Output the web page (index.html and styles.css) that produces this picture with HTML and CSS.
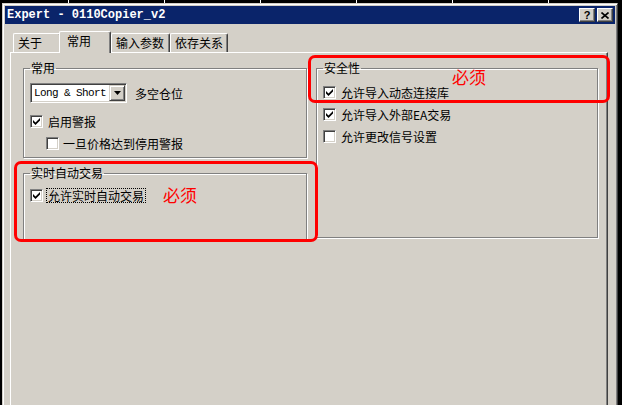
FILE: index.html
```html
<!DOCTYPE html>
<html>
<head>
<meta charset="utf-8">
<link rel="stylesheet" href="styles.css">
</head>
<body>
<div class="chart-top"></div>
<div class="dialog">
  <div class="titlebar">
    <span class="title">Expert - 0110Copier_v2</span>
    <div class="tbtns">
      <span class="tbtn help">?</span>
      <span class="tbtn close"><svg width="8" height="7" viewBox="0 0 8 7"><path d="M0.5 0.5 L7.5 6.5 M7.5 0.5 L0.5 6.5" stroke="#000" stroke-width="1.6" fill="none"/></svg></span>
    </div>
  </div>
  <div class="main">
    <div class="tabs">
      <span class="tab tab-about">关于</span>
      <span class="tab tab-common active">常用</span>
      <span class="tab tab-inputs">输入参数</span>
      <span class="tab tab-deps">依存关系</span>
    </div>
    <div class="panel">
      <div class="cols">
        <div class="col">
          <fieldset class="group g-common">
            <legend>常用</legend>
            <div class="stack">
              <div class="row">
                <div class="select">
                  <span class="sel-text">Long &amp; Short</span>
                  <span class="sel-btn"><svg width="7" height="4" viewBox="0 0 7 4"><path d="M0 0 H7 L3.5 4 Z" fill="#000"/></svg></span>
                </div>
                <span>多空仓位</span>
              </div>
              <div class="check gap12">
                <span class="box"><svg width="7" height="7" viewBox="0 0 7 7"><path d="M0 2 L2.5 4.5 L7 0 L7 2.5 L2.5 7 L0 4.5 Z" fill="#000"/></svg></span>
                <span>启用警报</span>
              </div>
              <div class="check gap9 indent">
                <span class="box"></span>
                <span>一旦价格达到停用警报</span>
              </div>
            </div>
          </fieldset>
          <fieldset class="group g-auto">
            <legend>实时自动交易</legend>
            <div class="check tight">
              <span class="box"><svg width="7" height="7" viewBox="0 0 7 7"><path d="M0 2 L2.5 4.5 L7 0 L7 2.5 L2.5 7 L0 4.5 Z" fill="#000"/></svg></span>
              <span class="focus">允许实时自动交易</span>
            </div>
          </fieldset>
        </div>
        <fieldset class="group g-safe">
          <legend>安全性</legend>
          <div class="stack">
            <div class="check">
              <span class="box"><svg width="7" height="7" viewBox="0 0 7 7"><path d="M0 2 L2.5 4.5 L7 0 L7 2.5 L2.5 7 L0 4.5 Z" fill="#000"/></svg></span>
              <span>允许导入动态连接库</span>
            </div>
            <div class="check gap9">
              <span class="box"><svg width="7" height="7" viewBox="0 0 7 7"><path d="M0 2 L2.5 4.5 L7 0 L7 2.5 L2.5 7 L0 4.5 Z" fill="#000"/></svg></span>
              <span>允许导入外部EA交易</span>
            </div>
            <div class="check gap9">
              <span class="box"></span>
              <span>允许更改信号设置</span>
            </div>
          </div>
        </fieldset>
      </div>
      <div class="mark mark-safe"></div>
      <span class="note note-safe">必须</span>
      <div class="mark mark-auto"></div>
      <span class="note note-auto">必须</span>
    </div>
  </div>
</div>
</body>
</html>
```
FILE: styles.css
```css
* { box-sizing: border-box; }
html, body { margin: 0; padding: 0; }
body {
  background: #000;
  width: 622px;
  height: 405px;
  overflow: hidden;
  font-family: "Noto Sans CJK SC", "Liberation Sans", sans-serif;
  font-size: 12px;
  color: #000;
}
.chart-top {
  height: 3px;
  background: repeating-linear-gradient(90deg, transparent 0 68px, #fff 68px 69px, transparent 69px 96px);
}
.dialog {
  margin-left: 2px;
  width: 616px;
  height: 430px;
  background: #d4d0c8;
  border: 1px solid;
  border-color: #d4d0c8 #404040 #404040 #d4d0c8;
  box-shadow: inset 1px 1px #fff, inset -1px -1px #808080;
  padding: 2px;
  display: flex;
  flex-direction: column;
}
.titlebar {
  height: 18px;
  background: #0a246a;
  display: flex;
  align-items: center;
  justify-content: space-between;
  padding: 0 2px;
}
.title {
  color: #fff;
  font: bold 12px/14px "Liberation Mono", monospace;
}
.tbtns { display: flex; gap: 2px; }
.tbtn {
  width: 16px;
  height: 14px;
  background: #d4d0c8;
  border: 1px solid;
  border-color: #fff #404040 #404040 #fff;
  box-shadow: inset -1px -1px #808080;
  display: flex;
  align-items: center;
  justify-content: center;
  font: bold 11px/1 "Liberation Sans", sans-serif;
}
.main {
  flex: 1;
  display: flex;
  flex-direction: column;
  padding: 7px 7px 0 5px;
}
.tabs {
  display: flex;
  align-items: flex-end;
  height: 21px;
  padding-left: 3px;
  position: relative;
  z-index: 1;
}
.tab {
  height: 19px;
  padding: 2px 0 0 4px;
  border: 1px solid;
  border-bottom: none;
  border-color: #fff #404040 #404040 #fff;
  box-shadow: inset -1px 0 #808080;
  border-radius: 2px 2px 0 0;
  line-height: 14px;
  white-space: nowrap;
  background: #d4d0c8;
}
.tab-about { width: 48px; }
.tab-common { width: 52px; }
.tab-inputs { width: 59px; }
.tab-deps { width: 58px; }
.tab.active {
  height: 22px;
  margin: 0 0 -1px -2px;
  padding-left: 7px;
  position: relative;
}
.panel {
  flex: 1;
  position: relative;
  border-top: 1px solid #fff;
  border-left: 1px solid #fff;
  border-right: 1px solid #404040;
  box-shadow: inset -1px 0 #808080;
  padding: 8px 9px 0 12px;
}
.cols {
  display: grid;
  grid-template-columns: 284px 282px;
  column-gap: 9px;
  align-items: stretch;
}
.col { display: flex; flex-direction: column; gap: 8px; }
fieldset.group {
  margin: 0;
  min-width: 0;
  border: 1px solid #808080;
  box-shadow: 1px 1px #fff, inset 1px 1px #fff;
  padding: 8px 6px 7px 6px;
}
legend {
  padding: 0 1px;
  line-height: 14px;
  font-size: 12px;
}
fieldset.g-auto { padding: 9px 6px 37px 6px; }
fieldset.g-safe { padding: 11px 6px 0 6px; margin-bottom: 2px; }
.stack { display: flex; flex-direction: column; }
.row { display: flex; align-items: center; gap: 8px; height: 20px; }
.select {
  width: 97px;
  height: 20px;
  background: #fff;
  border: 1px solid;
  border-color: #808080 #fff #fff #808080;
  box-shadow: inset 1px 1px #404040, inset -1px -1px #d4d0c8;
  display: flex;
  align-items: center;
  justify-content: space-between;
  padding: 0 1px 0 3px;
}
.sel-text {
  font: 11px/12px "Liberation Mono", monospace;
  letter-spacing: -0.6px;
  white-space: nowrap;
}
.sel-btn {
  width: 16px;
  height: 16px;
  background: #d4d0c8;
  border: 1px solid;
  border-color: #d4d0c8 #404040 #404040 #d4d0c8;
  box-shadow: inset 1px 1px #fff, inset -1px -1px #808080;
  display: flex;
  align-items: center;
  justify-content: center;
}
.check {
  display: flex;
  align-items: center;
  gap: 5px;
  height: 13px;
  white-space: nowrap;
  line-height: 14px;
}
.check.tight { gap: 3px; }
.gap12 { margin-top: 12px; }
.gap9 { margin-top: 9px; }
.check.indent { padding-left: 16px; gap: 4px; }
.box {
  width: 13px;
  height: 13px;
  flex: none;
  background: #fff;
  border: 1px solid;
  border-color: #808080 #fff #fff #808080;
  box-shadow: inset 1px 1px #404040, inset -1px -1px #d4d0c8;
  display: flex;
  align-items: center;
  justify-content: center;
}
.focus {
  border: 1px dotted #000;
  padding: 0 1px;
  line-height: 13px;
}
.mark {
  position: absolute;
  border: 3px solid #f00;
  border-radius: 7px;
}
.mark-safe { left: 297px; top: 2px; width: 302px; height: 48px; }
.mark-auto { left: 3px; top: 108px; width: 304px; height: 81px; }
.note {
  position: absolute;
  color: #f00;
  font-size: 17px;
  line-height: 17px;
}
.note-safe { left: 441px; top: 15px; }
.note-auto { left: 152px; top: 133px; }
```
